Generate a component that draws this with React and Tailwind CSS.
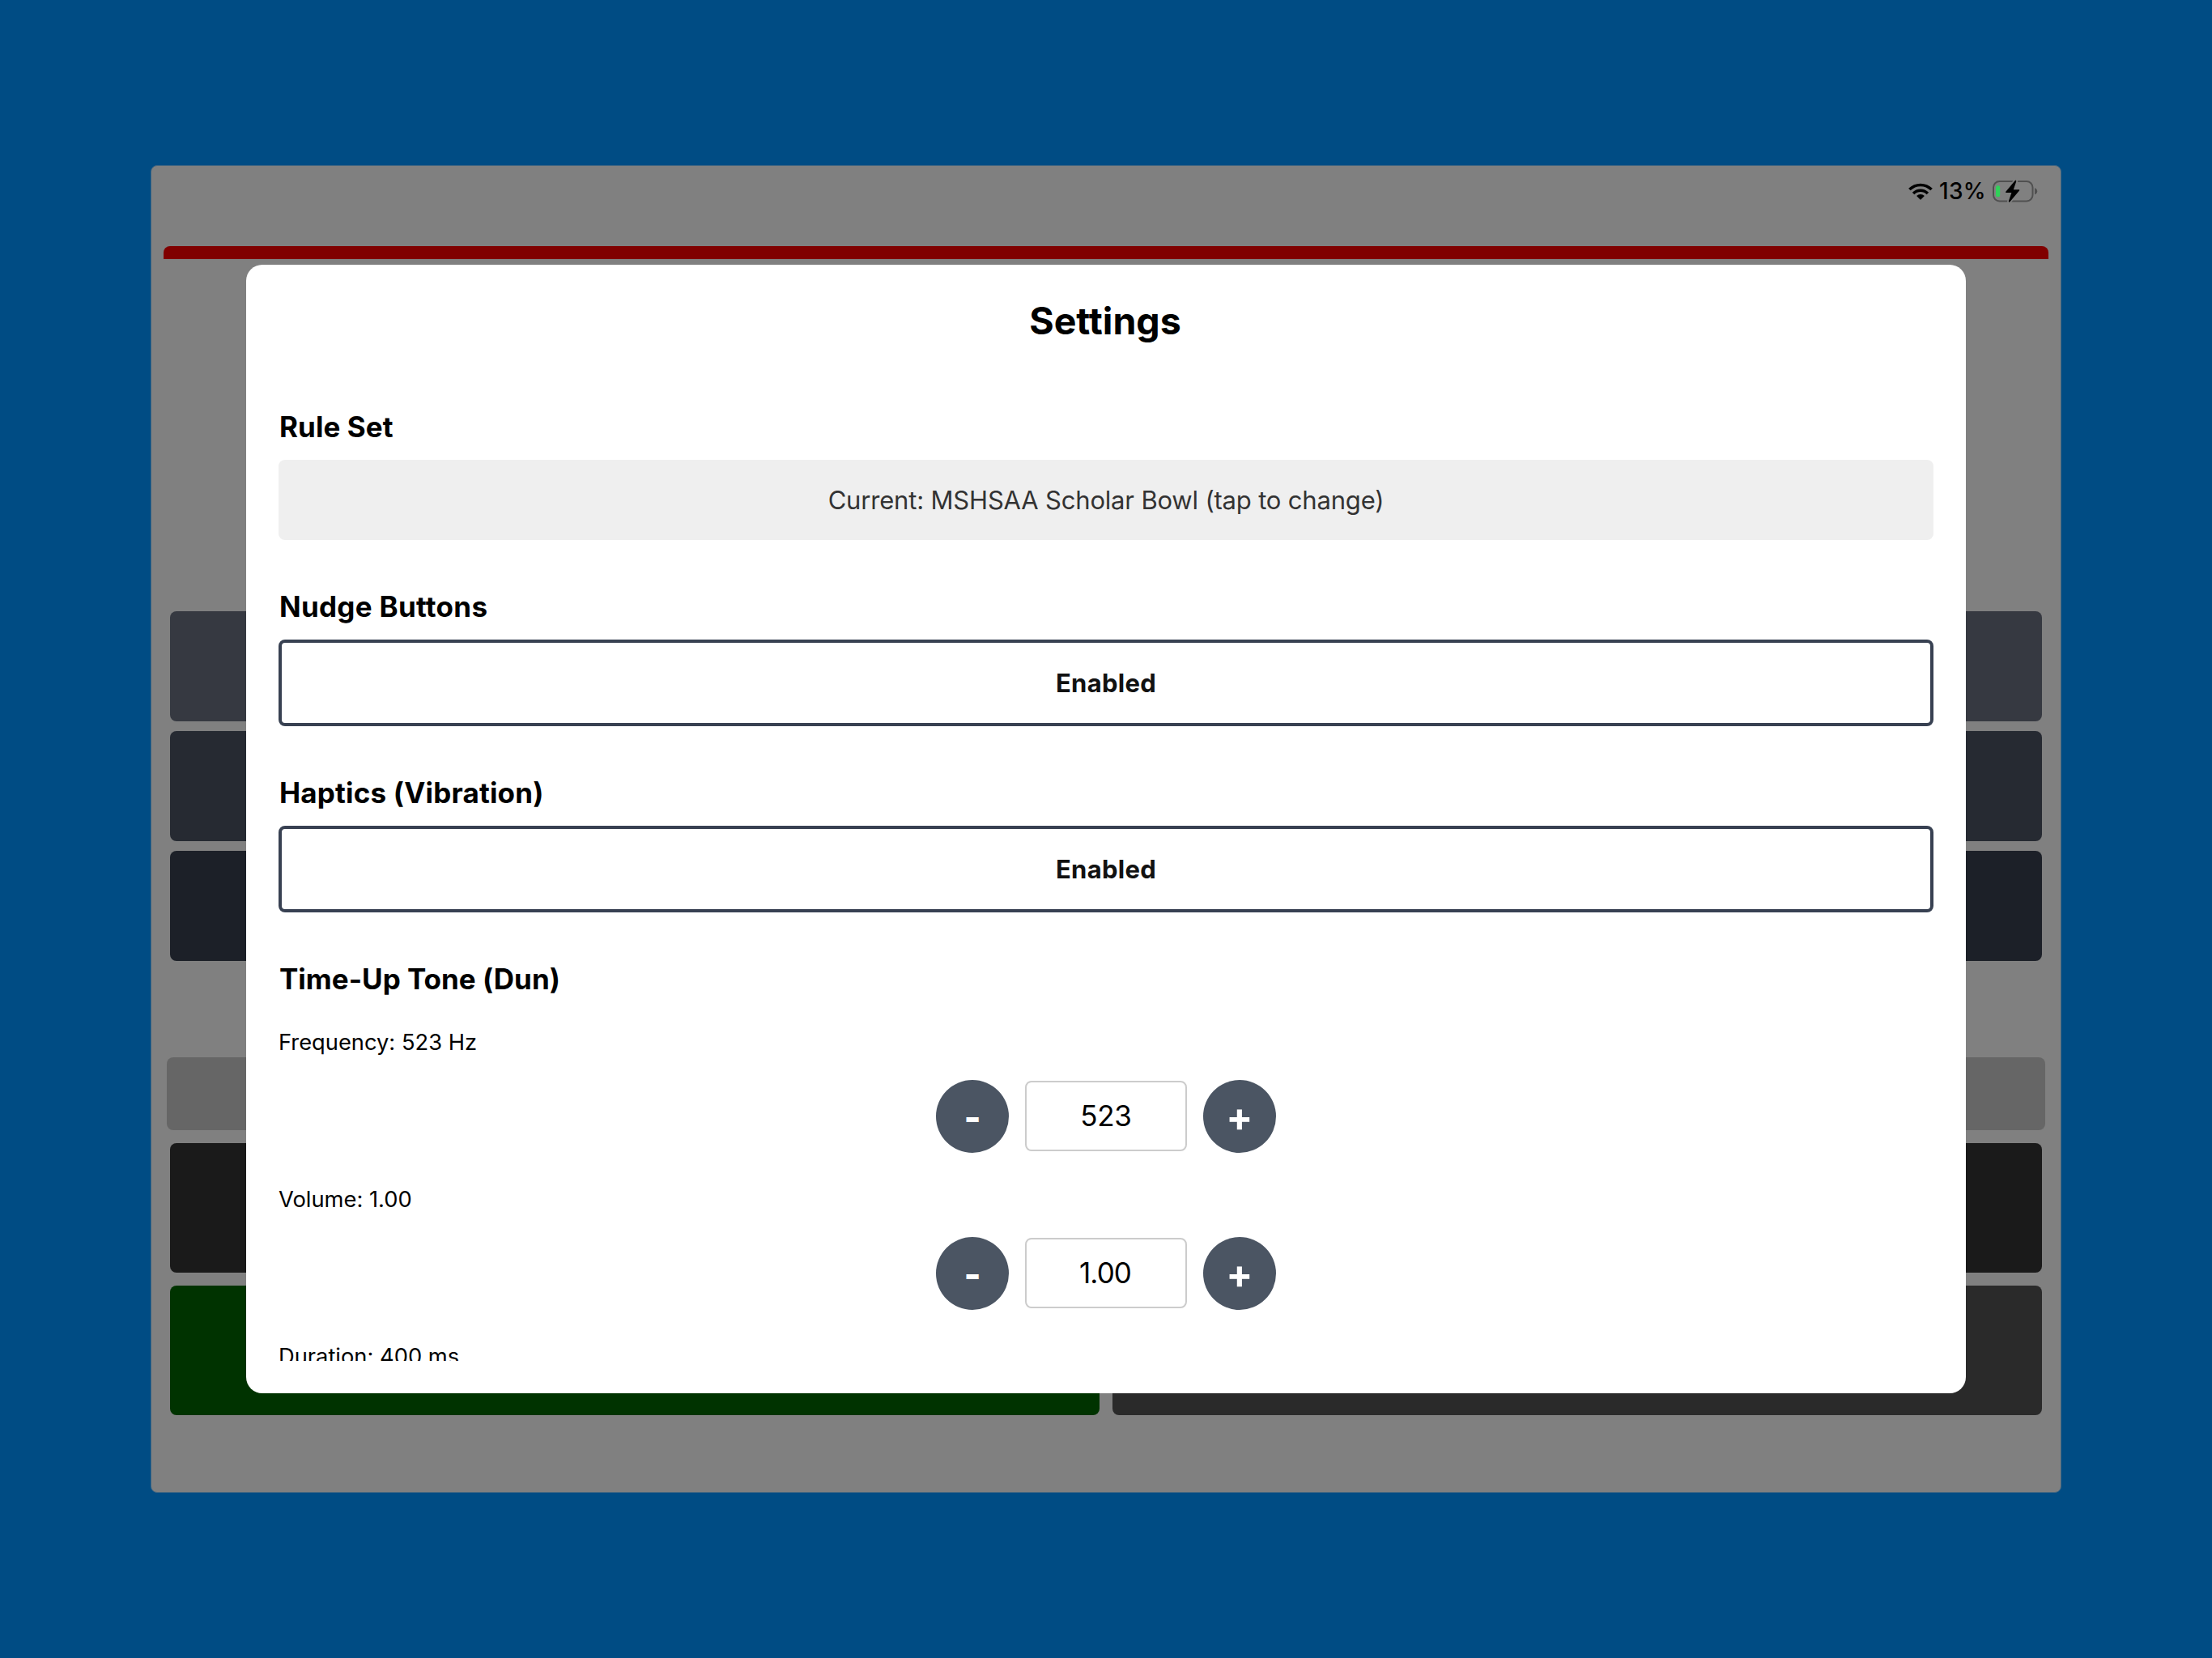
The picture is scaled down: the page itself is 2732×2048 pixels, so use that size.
import React from "react";

function WifiIcon() {
  return (
    <svg width="30" height="21" viewBox="0 0 30 21" fill="none" stroke="#000" strokeWidth="3.5">
      <path d="M1.4 8.100a19.200 19.200 0 0 1 27.200 0" />
      <path d="M6.100 13a12.500 12.500 0 0 1 17.800 0" />
      <path
        d="M15 14.100c1.900 0 3.600.7 4.900 2l-4.200 4.200a1 1 0 0 1-1.400 0l-4.200-4.200a7 7 0 0 1 4.900-2z"
        fill="#000"
        stroke="none"
      />
    </svg>
  );
}

function BatteryIcon() {
  return (
    <svg width="56" height="30" viewBox="0 0 56 30">
      <rect x="1" y="3" width="48.5" height="24.5" rx="7.5" fill="none" stroke="#505050" strokeWidth="2" />
      <path d="M52 11.2c2 .5 3.2 2 3.2 4s-1.200 3.500-3.200 4z" fill="#505050" />
      <rect x="4" y="8.300" width="5.200" height="14" rx="2.400" fill="#30d158" />
      <path
        d="M27.600 2.300 16.300 15.700c-.5.6-.2 1.200.5 1.200h6.600l-3.500 10.300c-.4 1.300.7 1.900 1.500 1L33 14.500c.5-.6.2-1.200-.5-1.200h-6.700l3.400-10.100c.4-1.300-.8-1.900-1.600-.9z"
        fill="#000"
        stroke="#808080"
        strokeWidth="3.500"
        paintOrder="stroke"
      />
    </svg>
  );
}

function StatusBar() {
  return (
    <div className="flex h-[99px] items-start justify-end pr-[28px]">
      <div className="mt-[21px]">
        <WifiIcon />
      </div>
      <span className="mt-[13px] ml-[8px] w-[66px] text-[28px] leading-[36px] font-medium tracking-[0.3px] text-black">
        13%
      </span>
      <div className="mt-[16px]">
        <BatteryIcon />
      </div>
    </div>
  );
}

function Backdrop() {
  return (
    <>
      <StatusBar />
      <div className="mx-[15px] h-4 rounded-t-lg bg-[#800000]" />
      <div className="mx-[23px] mt-[435px] flex flex-col gap-3">
        <div className="h-[136px] rounded-lg bg-[#363941]" />
        <div className="h-[136px] rounded-lg bg-[#262a32]" />
        <div className="h-[136px] rounded-lg bg-[#1c2028]" />
      </div>
      <div className="mx-[19px] mt-[119px] h-[90px] rounded-lg bg-[#666666]" />
      <div className="mx-[23px] mt-4 h-[160px] rounded-lg bg-[#1a1a1a]" />
      <div className="mx-[23px] mt-4 grid grid-cols-2 gap-4">
        <div className="h-[160px] rounded-lg bg-[#003300]" />
        <div className="h-[160px] rounded-lg bg-[#2a2a2a]" />
      </div>
    </>
  );
}

function Heading({ children, className }) {
  return (
    <h2 className={"pl-px text-[35px] leading-[44px] font-bold text-black " + className}>{children}</h2>
  );
}

function Toggle({ children }) {
  return (
    <button className="mt-[19px] block h-[107px] w-full rounded-lg border-4 border-[#384152] bg-white pt-[2px] text-center text-[31px] font-bold tracking-[0.3px] text-[#111111]">
      {children}
    </button>
  );
}

function RoundButton({ children }) {
  return (
    <button className="flex size-[90px] items-center justify-center rounded-full bg-[#4b5563] text-white">
      {children}
    </button>
  );
}

function Stepper({ label, value, valueClass }) {
  return (
    <div className="mb-10">
      <p className="pt-px text-[27.3px] leading-[34px] text-black">{label}</p>
      <div className="mt-[29px] flex items-start justify-center gap-5">
        <RoundButton>
          <span className="mt-[2px] text-[45px] leading-[54px] font-extrabold">-</span>
        </RoundButton>
        <div
          className={
            "mt-px flex h-[87px] w-[200px] items-center justify-center rounded-lg border-2 border-[#cccccc] pb-px text-[35px] leading-[44px] text-black " +
            valueClass
          }
        >
          {value}
        </div>
        <RoundButton>
          <span className="mt-[2px] text-[49px] leading-[58px] font-bold">+</span>
        </RoundButton>
      </div>
    </div>
  );
}

function SettingsModal() {
  return (
    <div className="absolute top-[122px] left-[117px] h-[1394px] w-[2124px] rounded-[20px] bg-white p-10">
      <div className="h-[1314px] overflow-hidden">
        <h1 className="pr-[2px] text-center text-[46.5px] leading-[58px] font-bold text-black">Settings</h1>

        <Heading className="mt-20 tracking-[0.08px]">Rule Set</Heading>
        <button className="mt-[19px] block h-[99px] w-full rounded-lg bg-[#efefef] pt-[2px] text-center text-[31px] tracking-[-0.18px] text-[#333333]">
          Current: MSHSAA Scholar Bowl (tap to change)
        </button>

        <Heading className="mt-[60px] tracking-[0.28px]">Nudge Buttons</Heading>
        <Toggle>Enabled</Toggle>

        <Heading className="mt-[60px] tracking-[0.19px]">Haptics (Vibration)</Heading>
        <Toggle>Enabled</Toggle>

        <Heading className="mt-[60px] mb-[39px]">Time-Up Tone (Dun)</Heading>
        <Stepper label="Frequency: 523 Hz" value="523" valueClass="tracking-[-0.3px]" />
        <Stepper label="Volume: 1.00" value="1.00" valueClass="tracking-[-0.9px] pr-[2px]" />
        <p className="pt-px text-[27.3px] leading-[34px] text-black">Duration: 400 ms</p>
      </div>
    </div>
  );
}

export default function App() {
  return (
    <main className="h-[2048px] w-[2732px] bg-[#004c84] px-[186px] pt-[204px] font-['Inter',sans-serif]">
      <div className="relative h-[1640px] w-[2360px] overflow-hidden rounded-lg border border-[#406682] bg-[#808080]">
        <Backdrop />
        <SettingsModal />
      </div>
    </main>
  );
}
